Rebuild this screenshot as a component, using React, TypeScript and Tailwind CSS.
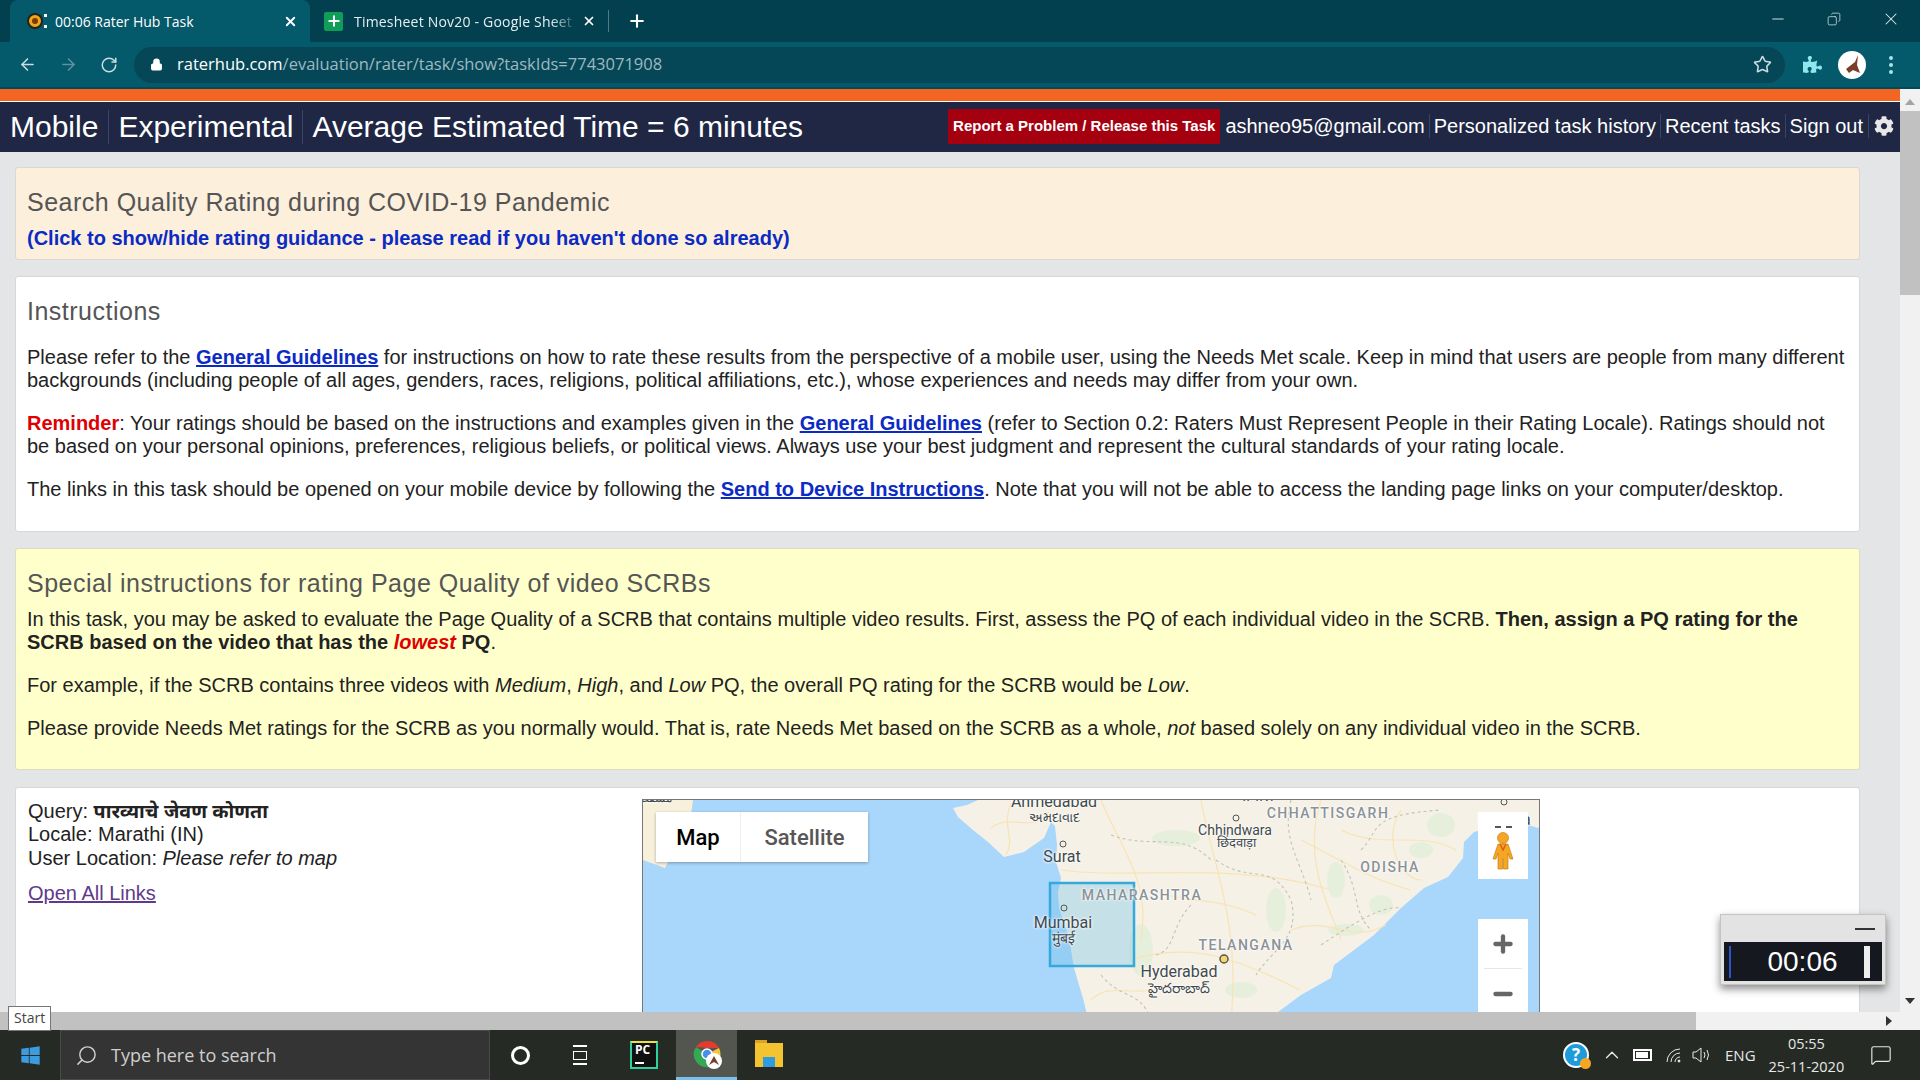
import React from 'react';
import { ArrowLeft, ArrowRight, ChevronUp, Copy, Lock, Minus, MessageSquare, Plus, RotateCw, Search, Star, X } from 'lucide-react';
import { FaCog, FaPuzzlePiece, FaWindows } from 'react-icons/fa';

const MapLabel: React.FC<{ x: number; y: number; className?: string; children: React.ReactNode }> = ({ x, y, className, children }) => (
  <span
    className={`absolute -translate-x-1/2 whitespace-nowrap leading-none [text-shadow:0_0_3px_white,0_0_3px_white] ${className ?? 'text-[16px] text-[#3f4a4f]'}`}
    style={{ left: x, top: y }}
  >
    {children}
  </span>
);

const Tabs = () => (
  <div className="h-[42px] bg-[#02404f] flex items-center pl-[10px] text-[14px] text-white font-['Open_Sans',sans-serif]">
    <div className="w-[300px] h-[42px] bg-[#04596b] rounded-t-lg flex items-center pl-[16px] pr-[12px]">
      <svg width="24" height="20" viewBox="0 0 24 20">
        <circle cx="9" cy="10" r="7" fill="#f0a818" stroke="#222" strokeWidth="2" />
        <circle cx="9" cy="10" r="3" fill="#7a3b00" />
        <rect x="18" y="3" width="3" height="3" fill="#fff" />
        <rect x="18" y="14" width="3" height="3" fill="#fff" />
      </svg>
      <span className="ml-[5px] flex-1 truncate">00:06 Rater Hub Task</span>
      <X className="w-[15px] h-[15px]" strokeWidth={3} />
    </div>
    <div className="w-[298px] h-[42px] flex items-center pl-[14px] pr-[12px] text-[#e6eef0]">
      <div className="w-[19px] h-[19px] bg-[#0f9d58] flex items-center justify-center rounded-[2px] text-white shrink-0">
        <Plus className="w-[16px] h-[16px]" strokeWidth={3} />
      </div>
      <span className="ml-[11px] flex-1 whitespace-nowrap overflow-hidden tracking-[0.2px] [mask-image:linear-gradient(to_right,black_88%,transparent)]">Timesheet Nov20 - Google Sheet</span>
      <X className="w-[14px] h-[14px] ml-[4px] text-white shrink-0" strokeWidth={3} />
    </div>
    <div className="w-px h-[22px] bg-[#4f7b86]" />
    <Plus className="w-[20px] h-[20px] ml-[18px]" strokeWidth={2.5} />
    <div className="flex-1" />
    <div className="flex items-center gap-[40px] self-start h-[37px] pr-[19px] text-[#dfe9ec]">
      <Minus className="w-[18px] h-[18px]" strokeWidth={1.25} />
      <Copy className="w-[14px] h-[14px] -scale-x-100" strokeWidth={1.25} />
      <X className="w-[20px] h-[20px]" strokeWidth={1.25} />
    </div>
  </div>
);

const Toolbar = () => (
  <div className="h-[47px] bg-[#04596b] flex items-center pl-[18px] border-b-2 border-[#034957]">
    <ArrowLeft className="w-[19px] h-[19px] text-[#c9dde2]" />
    <ArrowRight className="w-[19px] h-[19px] text-[#5d929f] ml-[22px]" />
    <RotateCw className="w-[18px] h-[18px] text-[#c9dde2] ml-[22px]" />
    <div className="ml-[16px] h-[36px] w-[1651px] shrink-0 rounded-full bg-[#064757] flex items-center pl-[16px] pr-[13px] font-['Open_Sans',sans-serif] text-[16.5px]">
      <Lock className="w-[13px] h-[13px] text-white fill-white" />
      <span className="ml-[14px] text-white">raterhub.com<span className="text-[#9dbac2]">/evaluation/rater/task/show?taskIds=7743071908</span></span>
      <div className="flex-1" />
      <Star className="w-[19px] h-[19px] text-[#c9dde2]" />
    </div>
    <FaPuzzlePiece className="w-[19px] h-[19px] text-[#8fe6ec] ml-[18px] shrink-0" />
    <div className="ml-[16px] w-[28px] h-[28px] shrink-0 rounded-full bg-white overflow-hidden flex items-center justify-center">
      <svg width="24" height="24" viewBox="0 0 24 24">
        <path d="M6 16 L15 9 L18 2 L17 12 L20 20 L13 17 L9 20 Z" fill="#7a3d2a" />
      </svg>
    </div>
    <div className="ml-[23px] flex flex-col gap-[3px]">
      <span className="w-[4px] h-[4px] rounded-full bg-[#a6e3ea]" />
      <span className="w-[4px] h-[4px] rounded-full bg-[#a6e3ea]" />
      <span className="w-[4px] h-[4px] rounded-full bg-[#a6e3ea]" />
    </div>
  </div>
);

const NavItem: React.FC<{ children: React.ReactNode; className?: string }> = ({ children, className }) => (
  <span className={`whitespace-nowrap border-r border-[#3a4468] ${className ?? ''}`}>{children}</span>
);

const TopNav = () => (
  <div className="h-[50px] bg-[#1f2745] flex items-center justify-between text-white pl-[10px] pr-[6px]">
    <div className="flex items-center text-[30px] leading-[34px]">
      <NavItem className="pr-[10px]">Mobile</NavItem>
      <NavItem className="px-[9px]">Experimental</NavItem>
      <span className="pl-[9px] whitespace-nowrap">Average Estimated Time = 6 minutes</span>
    </div>
    <div className="flex items-center text-[20px] leading-[24px] -translate-y-px">
      <span className="h-[35px] px-[5px] mr-[5px] bg-[#a5000f] text-[15px] font-bold flex items-center whitespace-nowrap">Report a Problem / Release this Task</span>
      <NavItem className="pr-[4px]">ashneo95@gmail.com</NavItem>
      <NavItem className="px-[4px]">Personalized task history</NavItem>
      <NavItem className="px-[4px]">Recent tasks</NavItem>
      <NavItem className="pl-[4px] pr-[5px]">Sign out</NavItem>
      <FaCog className="w-[20px] h-[20px] ml-[5px] text-[#e8e8e8]" />
    </div>
  </div>
);

const GuideLink: React.FC<{ children: React.ReactNode }> = ({ children }) => (
  <a className="font-bold text-[#0b2bc4] underline">{children}</a>
);

const MapPanel = () => (
  <div className="relative w-[898px] h-[220px] shrink-0 overflow-hidden border-t border-l border-r border-[#777] bg-[#a9d6fb] font-['Roboto',sans-serif]">
    <svg className="absolute inset-0" width="898" height="220" viewBox="642 800 898 220">
      <path d="M642 800 H692 L690 815 L700 860 L668 860 L664 868 L642 860 Z" fill="#f7f1dc" />
      <path
        d="M977 800 L966 805 L952 808 L957 817 L972 830 L987 842 L1003 857 L1023 852 L1043 838 L1050 822 L1054 826 L1056 845 L1055 862 L1060 878 L1057 892 L1058 908 L1068 938 L1073 968 L1083 1002 L1087 1020 L1268 1020 L1277 1012 L1300 995 L1330 978 L1333 965 L1373 935 L1400 908 L1423 888 L1447 877 L1462 858 L1463 842 L1473 832 L1490 828 L1527 825 L1537 828 L1540 826 L1540 800 Z"
        fill="#f5f1e6"
      />
      <g fill="#e6efdc">
        <ellipse cx="1175" cy="838" rx="24" ry="8" />
        <ellipse cx="1140" cy="950" rx="12" ry="26" />
        <ellipse cx="1335" cy="880" rx="9" ry="18" />
        <ellipse cx="1275" cy="910" rx="10" ry="22" />
        <ellipse cx="1380" cy="905" rx="12" ry="10" />
        <ellipse cx="1440" cy="825" rx="14" ry="12" />
        <ellipse cx="1420" cy="850" rx="12" ry="8" />
        <ellipse cx="1345" cy="930" rx="18" ry="6" />
        <ellipse cx="1240" cy="990" rx="16" ry="8" />
      </g>
      <path d="M1100 800 C1120 850 1150 880 1140 940 M1060 870 C1130 880 1230 860 1330 890 M1200 800 C1210 860 1240 920 1230 1020 M1130 960 C1190 940 1240 960 1299 990 M1320 800 C1300 860 1330 910 1340 940 M1400 810 C1380 840 1400 880 1420 880 M990 828 C1010 812 1030 835 1048 812 M1010 803 C1000 825 1015 840 1005 855 M1090 1000 C1110 980 1130 1000 1170 985 M1150 890 C1190 905 1210 895 1255 915 M1340 830 C1380 850 1420 830 1455 850 M1290 930 C1330 915 1350 945 1385 925 M1300 840 C1340 860 1370 880 1410 890" fill="none" stroke="#f9e3b4" strokeWidth="1.2" />
      <path d="M1215 860 C1250 885 1270 860 1290 900 C1300 940 1270 950 1255 975 M1110 835 C1150 850 1180 830 1210 860 M1290 800 C1280 840 1300 860 1310 900 M1100 975 C1120 1000 1140 990 1150 1020 M1340 860 C1360 890 1350 910 1370 930 M1360 850 C1380 830 1365 815 1440 810 M1320 945 C1350 925 1380 905 1400 908 M1190 905 C1170 925 1175 950 1155 955" fill="none" stroke="#c2c2b8" strokeWidth="1.1" strokeDasharray="3 3" />
      <rect x="1049" y="883" width="84" height="83" fill="#6fc0ec" fillOpacity="0.35" stroke="#35a9dc" strokeWidth="2.5" />
      <circle cx="1063" cy="908" r="3" fill="none" stroke="#555" />
      <circle cx="1062" cy="844" r="3" fill="none" stroke="#555" />
      <circle cx="1235" cy="818" r="3" fill="none" stroke="#555" />
      <circle cx="1223" cy="959" r="4" fill="#f5d76e" stroke="#555" strokeWidth="1.5" />
      <circle cx="1503" cy="802" r="3" fill="none" stroke="#555" />
    </svg>
    <MapLabel x={12} y={-8} className="text-[12px] text-[#3f4a4f]">مسقط</MapLabel>
    <MapLabel x={411} y={-6}>Ahmedabad</MapLabel>
    <MapLabel x={411} y={11} className="text-[13px] text-[#3f4a4f]">અમદાવાદ</MapLabel>
    <MapLabel x={419} y={49}>Surat</MapLabel>
    <MapLabel x={611} y={-12} className="text-[16px] text-[#3f4a4f]">भोपाल</MapLabel>
    <MapLabel x={592} y={23} className="text-[14px] text-[#3f4a4f]">Chhindwara</MapLabel>
    <MapLabel x={593} y={36} className="text-[13px] text-[#3f4a4f]">छिंदवाड़ा</MapLabel>
    <MapLabel x={685} y={6} className="text-[14px] font-medium tracking-[1.5px] text-[#8a9298]">CHHATTISGARH</MapLabel>
    <MapLabel x={747} y={60} className="text-[14px] font-medium tracking-[1.5px] text-[#8a9298]">ODISHA</MapLabel>
    <MapLabel x={499} y={88} className="text-[14px] font-medium tracking-[1.5px] text-[#8a9298]">MAHARASHTRA</MapLabel>
    <MapLabel x={420} y={115}>Mumbai</MapLabel>
    <MapLabel x={420} y={131} className="text-[14px] text-[#3f4a4f]">मुंबई</MapLabel>
    <MapLabel x={603} y={138} className="text-[14px] font-medium tracking-[1.5px] text-[#8a9298]">TELANGANA</MapLabel>
    <MapLabel x={536} y={164}>Hyderabad</MapLabel>
    <MapLabel x={536} y={181} className="text-[14px] text-[#3f4a4f]">హైదరాబాద్</MapLabel>
    <MapLabel x={861} y={12}>Kolkata</MapLabel>
    <div className="absolute left-[13px] top-[12px] h-[50px] flex bg-white shadow-[0_1px_3px_rgba(0,0,0,0.3)] text-[22px]">
      <span className="w-[85px] flex items-center justify-center font-medium text-black border-r border-[#eee]">Map</span>
      <span className="w-[127px] flex items-center justify-center font-medium text-[#565656]">Satellite</span>
    </div>
    <div className="absolute left-[835px] top-[12px] w-[50px] h-[67px] bg-white flex flex-col items-center">
      <div className="flex gap-[5px] mt-[14px]">
        <span className="w-[6px] h-[2px] bg-[#555]" />
        <span className="w-[6px] h-[2px] bg-[#555]" />
      </div>
      <svg className="mt-[4px]" width="22" height="38" viewBox="0 0 22 38">
        <circle cx="11" cy="6" r="5.5" fill="#f5a623" stroke="#c9801a" strokeWidth="0.7" />
        <path d="M6 12 H16 L21 27 H18 L16 21 V37 H11.5 V27 H10.5 V37 H6 V21 L4 27 H1 Z" fill="#f5a623" stroke="#c9801a" strokeWidth="0.7" />
        <path d="M8 12 L11 18 L14 12" fill="none" stroke="#d9601a" strokeWidth="1.5" />
      </svg>
    </div>
    <div className="absolute left-[835px] top-[119px] w-[50px] h-[101px] bg-white flex flex-col items-center text-[#666]">
      <Plus className="w-[26px] h-[26px] mt-[12px]" strokeWidth={4} />
      <div className="w-[38px] h-px bg-[#e6e6e6] mt-[11px]" />
      <Minus className="w-[26px] h-[26px] mt-[12px]" strokeWidth={4} />
    </div>
  </div>
);

const Content = () => (
  <div className="flex-1 min-h-0 overflow-hidden bg-[#e4e5e6] pl-[15px] pr-[40px] pt-[15px] flex flex-col gap-[16px] text-[20px] leading-[23px] text-[#222]">
    <section className="h-[93px] shrink-0 rounded-[3px] border border-[#dcd8cf] bg-[#fcefdc] px-[11px] pt-[19px]">
      <h2 className="text-[25px] leading-[30px] tracking-[0.5px] text-[#555]">Search Quality Rating during COVID-19 Pandemic</h2>
      <a className="block mt-[10px] font-bold text-[#0b2bc4]">(Click to show/hide rating guidance - please read if you haven't done so already)</a>
    </section>
    <section className="h-[256px] shrink-0 rounded-[3px] border border-[#d8d8d8] bg-white px-[11px] pt-[19px]">
      <h2 className="text-[25px] leading-[30px] tracking-[0.5px] text-[#555]">Instructions</h2>
      <p className="mt-[20px]">Please refer to the <GuideLink>General Guidelines</GuideLink> for instructions on how to rate these results from the perspective of a mobile user, using the Needs Met scale. Keep in mind that users are people from many different backgrounds (including people of all ages, genders, races, religions, political affiliations, etc.), whose experiences and needs may differ from your own.</p>
      <p className="mt-[20px]"><span className="font-bold text-[#e00000]">Reminder</span>: Your ratings should be based on the instructions and examples given in the <GuideLink>General Guidelines</GuideLink> (refer to Section 0.2: Raters Must Represent People in their Rating Locale). Ratings should not be based on your personal opinions, preferences, religious beliefs, or political views. Always use your best judgment and represent the cultural standards of your rating locale.</p>
      <p className="mt-[20px]">The links in this task should be opened on your mobile device by following the <GuideLink>Send to Device Instructions</GuideLink>. Note that you will not be able to access the landing page links on your computer/desktop.</p>
    </section>
    <section className="h-[222px] shrink-0 rounded-[3px] border border-[#dcdcc0] bg-[#ffffcc] px-[11px] pt-[19px]">
      <h2 className="text-[25px] leading-[30px] tracking-[0.5px] text-[#555]">Special instructions for rating Page Quality of video SCRBs</h2>
      <p className="mt-[10px]">In this task, you may be asked to evaluate the Page Quality of a SCRB that contains multiple video results. First, assess the PQ of each individual video in the SCRB. <b>Then, assign a PQ rating for the SCRB based on the video that has the <i className="text-[#e00000]">lowest</i> PQ</b>.</p>
      <p className="mt-[20px]">For example, if the SCRB contains three videos with <i>Medium</i>, <i>High</i>, and <i>Low</i> PQ, the overall PQ rating for the SCRB would be <i>Low</i>.</p>
      <p className="mt-[20px]">Please provide Needs Met ratings for the SCRB as you normally would. That is, rate Needs Met based on the SCRB as a whole, <i>not</i> based solely on any individual video in the SCRB.</p>
    </section>
    <section className="shrink-0 h-[240px] mt-px rounded-t-[3px] border border-[#d8d8d8] bg-white pl-[12px] pt-[11px] flex">
      <div className="w-[614px] shrink-0 pt-px leading-[23.4px]">
        <div>Query: <b className="text-[19.6px]">पारव्याचे जेवण कोणता</b></div>
        <div>Locale: Marathi (IN)</div>
        <div>User Location: <i>Please refer to map</i></div>
        <a className="block mt-[12px] text-[#5f3a8c] underline">Open All Links</a>
      </div>
      <MapPanel />
    </section>
  </div>
);

const TimerWidget = () => (
  <div className="absolute left-[1720px] top-[914px] w-[166px] h-[71px] bg-[#e3e3e3] border border-[#c4c4c4] shadow-[0_4px_8px_rgba(0,0,0,0.45)] flex flex-col">
    <div className="h-[27px] flex justify-end items-center pr-[10px]">
      <span className="w-[20px] h-[2px] bg-[#333]" />
    </div>
    <div className="mx-[3px] h-[39px] bg-[#15191f] flex items-center justify-between pl-[5px] pr-[12px] text-white text-[28px]">
      <span className="w-[2px] h-[32px] bg-[#2c57c8]" />
      <span className="ml-[10px]">00:06</span>
      <span className="w-[6px] h-[32px] bg-[#eeeeee]" />
    </div>
  </div>
);

const Taskbar = () => (
  <div className="relative h-[50px] bg-[#252a25] flex items-center font-['Open_Sans',sans-serif] text-[#e8e8e8]">
    <div className="w-[60px] flex justify-center"><FaWindows className="w-[21px] h-[21px] text-[#3d9be0]" /></div>
    <div className="w-[430px] h-full bg-[#343434] border border-[#4a4a4a] flex items-center pl-[14px] text-[18px] text-[#cfcfcf]">
      <Search className="w-[23px] h-[23px] -scale-x-100" strokeWidth={1.5} />
      <span className="ml-[13px]">Type here to search</span>
    </div>
    <div className="ml-[21px] w-[19px] h-[19px] rounded-full border-[3px] border-white" />
    <div className="ml-[40px] w-[20px] h-[20px] flex flex-col justify-between items-center">
      <span className="w-[14px] h-[2px] bg-white" />
      <span className="w-[14px] h-[9px] border border-white" />
      <span className="w-[14px] h-[2px] bg-white" />
    </div>
    <div className="ml-[40px] w-[28px] h-[28px] bg-[#111] border-2 border-[#2fd19c] border-t-[#e6e04a] text-[12px] font-bold leading-[14px] pl-[3px] text-white relative">
      PC
      <span className="absolute left-[3px] bottom-[3px] w-[9px] h-[2px] bg-white" />
    </div>
    <div className="ml-[18px] w-[61px] h-full bg-[#52564f] border-b-[3px] border-[#7cc0ee] flex items-center justify-center">
      <svg width="32" height="32" viewBox="0 0 32 32">
        <path d="M16 3 A13 13 0 0 1 28 10 H16 Z" fill="#e33b2e" />
        <path d="M28 10 A13 13 0 0 1 18 29 L16 16 Z" fill="#f9c33c" />
        <path d="M18 29 A13 13 0 0 1 5 9 L16 16 Z" fill="#35a853" />
        <path d="M5 9 A13 13 0 0 1 16 3 V10 Z" fill="#e33b2e" />
        <circle cx="16" cy="16" r="5" fill="#4a8df0" stroke="#fff" strokeWidth="1.5" />
        <circle cx="23" cy="23" r="8" fill="#fff" />
        <path d="M18 27 L23 18 L28 27 L23 24 Z" fill="#7a3d2a" />
      </svg>
    </div>
    <div className="ml-[18px] w-[28px] h-[24px] bg-[#f4c430] relative">
      <span className="absolute left-0 -top-[3px] w-[12px] h-[3px] bg-[#d9a520]" />
      <span className="absolute left-[8px] bottom-0 w-[12px] h-[10px] bg-[#2f9be0]" />
    </div>
    <div className="flex-1" />
    <div className="w-[357px] shrink-0 flex items-center">
      <div className="w-[26px] h-[26px] rounded-full bg-[#1e9bdb] border-2 border-white text-white font-bold text-[17px] leading-[22px] text-center relative">
        ?
        <span className="absolute -right-[4px] -bottom-[3px] w-[11px] h-[11px] rounded-full bg-[#f5a623]" />
      </div>
      <ChevronUp className="w-[22px] h-[22px] ml-[12px]" strokeWidth={1.5} />
      <div className="ml-[10px] w-[19px] h-[12px] border-2 border-white p-px"><div className="w-[12px] h-full bg-white" /></div>
      <svg className="ml-[13px]" width="16" height="16" viewBox="0 0 16 16" fill="none" stroke="#e8e8e8" strokeWidth="1">
        <path d="M10 15 A5 5 0 0 1 15 10 M6 15 A9 9 0 0 1 15 6 M2 15 A13 13 0 0 1 15 2" />
        <circle cx="14" cy="14" r="1" fill="#fff" />
      </svg>
      <svg className="ml-[11px]" width="20" height="18" viewBox="0 0 20 18" fill="none" stroke="#e8e8e8" strokeWidth="1">
        <path d="M1 6 H4 L9 2 V16 L4 12 H1 Z" />
        <path d="M12 6 Q14 9 12 12 M15 4 Q18 9 15 14" />
      </svg>
      <span className="ml-[13px] text-[15px]">ENG</span>
      <div className="ml-[13px] flex flex-col items-center text-[14.5px] leading-[23px]">
        <span>05:55</span>
        <span>25-11-2020</span>
      </div>
      <MessageSquare className="w-[22px] h-[22px] ml-[26px]" strokeWidth={1.25} />
    </div>
  </div>
);

export default function App() {
  return (
    <div className="relative w-[1920px] h-screen overflow-hidden flex flex-col font-['Liberation_Sans','Noto_Sans',sans-serif]">
      <Tabs />
      <Toolbar />
      <div className="flex flex-1 min-h-0">
        <div className="w-[1900px] flex flex-col min-h-0">
          <div className="h-[13px] bg-[#f26522] border-b border-white shrink-0" />
          <TopNav />
          <Content />
        </div>
        <div className="w-[20px] bg-[#f1f1f1] flex flex-col items-center">
          <span className="mt-[10px] w-0 h-0 border-x-[5px] border-x-transparent border-b-[6px] border-b-[#a3a3a3]" />
          <div className="mt-[6px] w-full h-[184px] bg-[#c1c1c1]" />
          <div className="flex-1" />
          <span className="mb-[8px] w-0 h-0 border-x-[5px] border-x-transparent border-t-[6px] border-t-[#333]" />
        </div>
      </div>
      <div className="h-[18px] bg-[#f1f1f1] flex items-center">
        <div className="w-[1696px] h-full bg-[#c1c1c1]" />
        <div className="flex-1" />
        <span className="mr-[28px] w-0 h-0 border-y-[5px] border-y-transparent border-l-[6px] border-l-[#333]" />
      </div>
      <Taskbar />
      <div className="absolute left-[8px] top-[1006px] h-[25px] px-[5px] bg-white border border-[#767676] text-[14px] leading-[22px] text-[#444] font-['Open_Sans',sans-serif]">Start</div>
      <TimerWidget />
    </div>
  );
}
